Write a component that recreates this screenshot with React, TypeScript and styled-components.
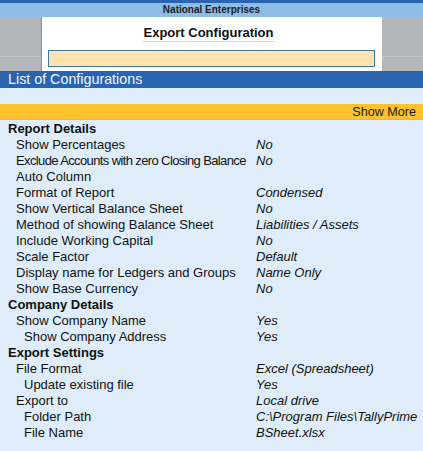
import styled, { createGlobalStyle } from 'styled-components';

type Row = {
  label: string;
  value?: string;
  level: 0 | 1 | 2;
  tight?: boolean;
};

const rows: Row[] = [
  { label: 'Report Details', level: 0 },
  { label: 'Show Percentages', value: 'No', level: 1 },
  { label: 'Exclude Accounts with zero Closing Balance', value: 'No', level: 1, tight: true },
  { label: 'Auto Column', level: 1 },
  { label: 'Format of Report', value: 'Condensed', level: 1 },
  { label: 'Show Vertical Balance Sheet', value: 'No', level: 1 },
  { label: 'Method of showing Balance Sheet', value: 'Liabilities / Assets', level: 1 },
  { label: 'Include Working Capital', value: 'No', level: 1 },
  { label: 'Scale Factor', value: 'Default', level: 1 },
  { label: 'Display name for Ledgers and Groups', value: 'Name Only', level: 1 },
  { label: 'Show Base Currency', value: 'No', level: 1 },
  { label: 'Company Details', level: 0 },
  { label: 'Show Company Name', value: 'Yes', level: 1 },
  { label: 'Show Company Address', value: 'Yes', level: 2 },
  { label: 'Export Settings', level: 0 },
  { label: 'File Format', value: 'Excel (Spreadsheet)', level: 1 },
  { label: 'Update existing file', value: 'Yes', level: 2 },
  { label: 'Export to', value: 'Local drive', level: 1 },
  { label: 'Folder Path', value: 'C:\\Program Files\\TallyPrime', level: 2 },
  { label: 'File Name', value: 'BSheet.xlsx', level: 2 },
];

const GlobalStyle = createGlobalStyle`
  html, body {
    margin: 0;
    padding: 0;
    background: #deedf9;
  }
  body {
    font-family: "Liberation Sans", Arial, sans-serif;
    color: #111;
  }
`;

const Screen = styled.div`
  width: 423px;
  height: 451px;
  display: flex;
  flex-direction: column;
  background: #deedf9;
  overflow: hidden;
`;

const TopStrip = styled.div`
  height: 3px;
  background: #2b64ae;
`;

const CompanyBar = styled.div`
  height: 14px;
  line-height: 14px;
  background: #8dbde7;
  text-align: center;
  font-size: 10px;
  font-weight: bold;
  color: #1b1b1b;
`;

const HeaderArea = styled.div`
  height: 54px;
  display: flex;
  justify-content: center;
  background: linear-gradient(
    to bottom,
    #b4b7ba 0,
    #b4b7ba 39px,
    #c3c6c9 39px,
    #c3c6c9 40px,
    #b4b7ba 40px
  );
`;

const Panel = styled.div`
  width: 340px;
  margin-left: -1px;
  background: #fff;
  border-left: 1px solid #8e9297;
  display: flex;
  flex-direction: column;
  align-items: center;
`;

const Title = styled.div`
  margin-top: 8px;
  margin-right: 6px;
  height: 16px;
  line-height: 16px;
  font-size: 13px;
  font-weight: bold;
  color: #111;
  padding: 0 1px;
  border-bottom: 1px solid #d6d6d6;
`;

const InputBox = styled.div`
  margin-top: 8px;
  width: 325px;
  height: 15px;
  background: #fee3b1;
  border: 1px solid #3b7c9c;
`;

const ListBar = styled.div`
  height: 17px;
  line-height: 17px;
  background: #2b64ae;
  color: #f2f6fb;
  font-size: 14.3px;
  padding-left: 8px;
`;

const Band = styled.div`
  height: 16px;
  background: #ddedf9;
`;

const ShowMoreBar = styled.div`
  height: 15px;
  line-height: 16px;
  background: #fdc22e;
  border-bottom: 1px solid #c9b98a;
  text-align: right;
  padding-right: 7px;
  font-size: 12.6px;
  color: #1f1a10;
`;

const List = styled.div`
  display: flex;
  flex-direction: column;
  padding-top: 1px;
`;

const ItemRow = styled.div<{ $level: number }>`
  display: grid;
  grid-template-columns: 256px 1fr;
  height: 16px;
  line-height: 16px;
  font-size: 13px;
  white-space: nowrap;
  font-weight: ${(p) => (p.$level === 0 ? 'bold' : 'normal')};
`;

const Label = styled.span<{ $level: number; $tight?: boolean }>`
  padding-left: ${(p) => 8 + p.$level * 8}px;
  letter-spacing: ${(p) => (p.$tight ? '-0.62px' : 'normal')};
`;

const Value = styled.span`
  font-style: italic;
  font-size: 13px;
`;

export default function App() {
  return (
    <>
      <GlobalStyle />
      <Screen>
        <TopStrip />
        <CompanyBar>National Enterprises</CompanyBar>
        <HeaderArea>
          <Panel>
            <Title>Export Configuration</Title>
            <InputBox />
          </Panel>
        </HeaderArea>
        <ListBar>List of Configurations</ListBar>
        <Band />
        <ShowMoreBar>Show More</ShowMoreBar>
        <List>
          {rows.map((r) => (
            <ItemRow key={r.label} $level={r.level}>
              <Label $level={r.level} $tight={r.tight}>
                {r.label}
              </Label>
              <Value>{r.value ?? ''}</Value>
            </ItemRow>
          ))}
        </List>
      </Screen>
    </>
  );
}
